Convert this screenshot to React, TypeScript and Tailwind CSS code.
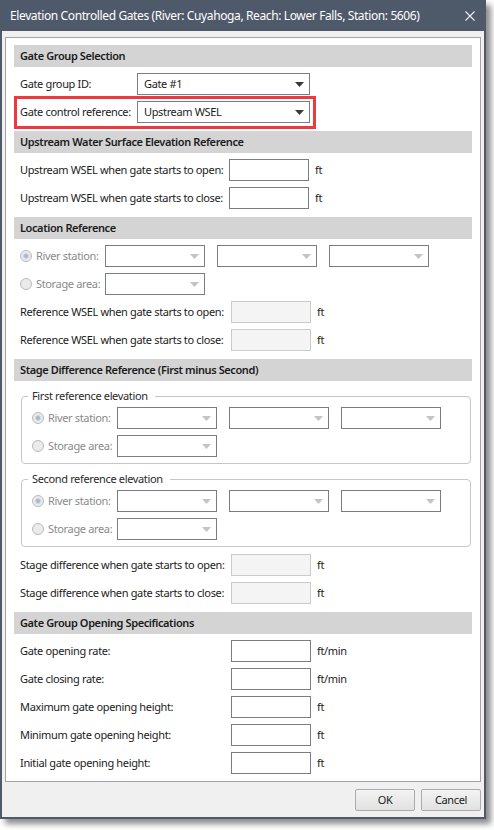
import type { ReactNode } from "react";

const Arrow = ({ disabled }: { disabled?: boolean }) => (
  <svg width="9" height="5" viewBox="0 0 9 5" className="shrink-0">
    <polygon points="0,0 9,0 4.5,5" fill={disabled ? "#c4c4c4" : "#3a3a3a"} />
  </svg>
);

type ComboProps = { width: string; value?: string; disabled?: boolean };

const Combo = ({ width, value, disabled }: ComboProps) => (
  <div
    className={`flex h-[22px] shrink-0 items-center justify-between border border-[#7b7b8e] bg-white pl-[6px] pr-[5px] ${width}`}
  >
    <span className="text-[#1b1b1b]">{value}</span>
    <Arrow disabled={disabled} />
  </div>
);

const TextBox = ({ disabled }: { disabled?: boolean }) => (
  <div
    className={
      disabled
        ? "h-[22px] w-[80px] shrink-0 border border-[#cbcbcb] bg-[#f4f4f4]"
        : "h-[22px] w-[80px] shrink-0 border border-[#7b7b8e] bg-white"
    }
  />
);

const Radio = ({ checked }: { checked?: boolean }) => (
  <span className="flex h-[12px] w-[12px] shrink-0 items-center justify-center rounded-full border border-[#bababa] bg-[#ebebeb]">
    {checked && <span className="h-[6px] w-[6px] rounded-full border border-[#c9d6e2] bg-[#a6bacd]" />}
  </span>
);

const Header = ({ children }: { children: ReactNode }) => (
  <div className="flex h-[22px] items-center bg-[#d4d4d4] pl-[6px] font-semibold tracking-[-0.4px] text-[#1b1b1b]">
    {children}
  </div>
);

type FieldRowProps = {
  label: string;
  labelWidth: string;
  unit: string;
  disabled?: boolean;
};

const FieldRow = ({ label, labelWidth, unit, disabled }: FieldRowProps) => (
  <div className="flex h-[22px] items-center pl-[6px]">
    <span className={`shrink-0 whitespace-nowrap text-[#1b1b1b] ${labelWidth}`}>{label}</span>
    <TextBox disabled={disabled} />
    <span className="ml-[6px] text-[#1b1b1b]">{unit}</span>
  </div>
);

const RadioRow = ({ label, checked, three }: { label: string; checked?: boolean; three?: boolean }) => (
  <div className="flex h-[22px] items-center gap-[12px]">
    <div className="flex w-[73px] shrink-0 items-center gap-[4px]">
      <Radio checked={checked} />
      <span className="whitespace-nowrap text-[#8a8a8a]">{label}</span>
    </div>
    <Combo width="w-[100px]" disabled />
    {three && <Combo width="w-[100px]" disabled />}
    {three && <Combo width="w-[100px]" disabled />}
  </div>
);

const GroupBox = ({ title, className }: { title: string; className: string }) => (
  <div
    className={`relative ml-[7px] mr-[1px] flex flex-col gap-[6px] rounded-[4px] border border-[#c6c6c6] pb-[6px] pl-[10px] pt-[10px] ${className}`}
  >
    <span className="absolute -top-[9px] left-[6px] h-[16px] bg-white pl-[4px] pr-[7px] leading-[16px] text-[#2a2a2a]">
      {title}
    </span>
    <RadioRow label="River station:" checked three />
    <RadioRow label="Storage area:" />
  </div>
);

export default function App() {
  return (
    <div className="h-[830px] w-[494px] bg-white font-['Noto_Sans',sans-serif] text-[11px] tracking-[-0.35px]">
      <div className="flex h-[819px] w-[486px] flex-col shadow-[5px_5px_6px_rgba(0,0,0,0.45)]">
        <div className="flex h-[31px] shrink-0 items-center justify-between bg-[#4e5a6a] pl-[10px] pr-[11px] text-[12px] tracking-[-0.38px] text-white">
          <span className="whitespace-nowrap">
            Elevation Controlled Gates (River: Cuyahoga, Reach: Lower Falls, Station: 5606)
          </span>
          <svg width="10" height="10" viewBox="0 0 10 10">
            <path d="M0.5 0.5 L9.5 9.5 M9.5 0.5 L0.5 9.5" stroke="#eef1f4" strokeWidth="1.1" />
          </svg>
        </div>

        <div className="flex flex-1 flex-col border-x-2 border-b-2 border-[#4e5a6a] bg-[#f0f0f0] px-[3px] pt-[6px]">
          <div className="flex flex-col border border-[#a3a3a3] bg-white px-[8px] pb-[7px] pt-[7px]">
            <Header>Gate Group Selection</Header>
            <div className="mt-[6px] flex h-[22px] items-center pl-[6px]">
              <span className="w-[117px] shrink-0 whitespace-nowrap text-[#1b1b1b]">Gate group ID:</span>
              <Combo width="w-[173px]" value="Gate #1" />
            </div>
            <div className="relative mt-[6px] flex h-[22px] items-center pl-[6px]">
              <span className="pointer-events-none absolute -top-[5px] left-0 h-[33px] w-[302px] border-[3px] border-[#ee3a3e]" />
              <span className="w-[117px] shrink-0 whitespace-nowrap text-[#1b1b1b]">Gate control reference:</span>
              <Combo width="w-[173px]" value="Upstream WSEL" />
            </div>

            <div className="mt-[8px]">
              <Header>Upstream Water Surface Elevation Reference</Header>
            </div>
            <div className="mt-[6px] flex flex-col gap-[6px]">
              <FieldRow label="Upstream WSEL when gate starts to open:" labelWidth="w-[209px]" unit="ft" />
              <FieldRow label="Upstream WSEL when gate starts to close:" labelWidth="w-[209px]" unit="ft" />
            </div>

            <div className="mt-[8px]">
              <Header>Location Reference</Header>
            </div>
            <div className="mt-[6px] flex flex-col gap-[6px] pl-[6px]">
              <RadioRow label="River station:" checked three />
              <RadioRow label="Storage area:" />
            </div>
            <div className="mt-[6px] flex flex-col gap-[6px]">
              <FieldRow label="Reference WSEL when gate starts to open:" labelWidth="w-[211px]" unit="ft" disabled />
              <FieldRow label="Reference WSEL when gate starts to close:" labelWidth="w-[211px]" unit="ft" disabled />
            </div>

            <div className="mt-[8px]">
              <Header>Stage Difference Reference (First minus Second)</Header>
            </div>
            <GroupBox title="First reference elevation" className="mt-[15px]" />
            <GroupBox title="Second reference elevation" className="mt-[15px]" />
            <div className="mt-[7px] flex flex-col gap-[6px]">
              <FieldRow label="Stage difference when gate starts to open:" labelWidth="w-[211px]" unit="ft" disabled />
              <FieldRow label="Stage difference when gate starts to close:" labelWidth="w-[211px]" unit="ft" disabled />
            </div>

            <div className="mt-[8px]">
              <Header>Gate Group Opening Specifications</Header>
            </div>
            <div className="mt-[6px] flex flex-col gap-[6px]">
              <FieldRow label="Gate opening rate:" labelWidth="w-[211px]" unit="ft/min" />
              <FieldRow label="Gate closing rate:" labelWidth="w-[211px]" unit="ft/min" />
              <FieldRow label="Maximum gate opening height:" labelWidth="w-[211px]" unit="ft" />
              <FieldRow label="Minimum gate opening height:" labelWidth="w-[211px]" unit="ft" />
              <FieldRow label="Initial gate opening height:" labelWidth="w-[211px]" unit="ft" />
            </div>
          </div>

          <div className="flex justify-end gap-[6px] pt-[7px]">
            <button className="h-[22px] w-[60px] rounded-[2px] border border-[#acacac] bg-linear-to-b from-[#f3f3f3] to-[#e1e1e1] text-[#1b1b1b]">
              OK
            </button>
            <button className="h-[22px] w-[60px] rounded-[2px] border border-[#acacac] bg-linear-to-b from-[#f3f3f3] to-[#e1e1e1] text-[#1b1b1b]">
              Cancel
            </button>
          </div>
        </div>
      </div>
    </div>
  );
}
